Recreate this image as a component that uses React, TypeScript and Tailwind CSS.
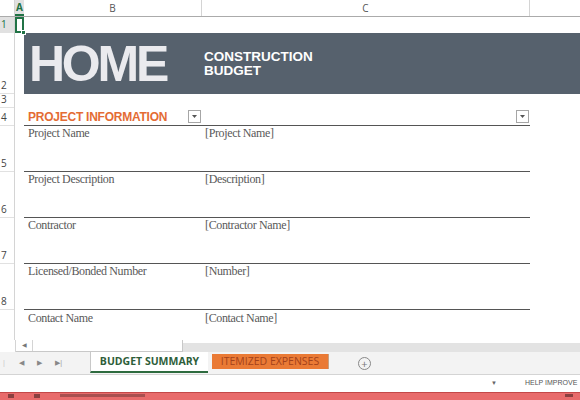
import React from "react";

const rowHeights = [16, 61, 14, 18, 46, 46, 46, 46, 31];

const Dropdown = () => (
  <div className="flex h-[13px] w-[13px] items-center justify-center border border-[#a6a6a6] bg-white">
    <svg width="5" height="3" viewBox="0 0 5 3">
      <path d="M0 0h5L2.5 3z" fill="#555" />
    </svg>
  </div>
);

const fields = [
  ["Project Name", "[Project Name]"],
  ["Project Description", "[Description]"],
  ["Contractor", "[Contractor Name]"],
  ["Licensed/Bonded Number", "[Number]"],
];

export default function App() {
  return (
    <div className="flex h-[400px] w-[580px] flex-col overflow-hidden bg-white font-['Open_Sans',sans-serif]">
      {/* column headers */}
      <div className="flex h-[17px] shrink-0 border-b border-[#ababab] text-[10px] text-[#555]">
        <div className="w-[15px] border-r border-[#d4d4d4]" />
        <div className="flex w-[9px] items-center justify-center border-b-2 border-[#217346] bg-[#e1e1e1] font-bold text-[#217346]">
          A
        </div>
        <div className="flex w-[178px] items-center justify-center border-r border-[#d4d4d4]">B</div>
        <div className="flex w-[328px] items-center justify-center border-r border-[#d4d4d4]">C</div>
        <div className="flex-1" />
      </div>

      {/* sheet body */}
      <div className="flex h-[323px] shrink-0 overflow-hidden">
        <div className="flex w-[15px] shrink-0 flex-col border-r border-[#d4d4d4] text-[10px] leading-none text-[#444]">
          {rowHeights.map((h, i) => (
            <div
              key={i}
              style={{ height: h }}
              className={`flex shrink-0 items-end border-b border-[#e1e1e1] pb-[3px] pl-[1px] ${
                i === 0 ? "bg-[#e1e1e1] text-[#217346]" : ""
              }`}
            >
              {i < 8 ? i + 1 : ""}
            </div>
          ))}
        </div>

        <div className="flex flex-1 flex-col">
          {/* row 1 with selected A1 */}
          <div className="flex h-[16px] shrink-0">
            <div className="relative h-[16px] w-[9px] border-2 border-[#217346]">
              <div className="absolute -bottom-[4px] -right-[4px] h-[5px] w-[5px] border border-white bg-[#217346]" />
            </div>
          </div>

          {/* row 2 banner */}
          <div className="flex h-[61px] shrink-0">
            <div className="w-[9px]" />
            <div className="flex flex-1 items-center bg-[#56616d] font-['Liberation_Sans',sans-serif] font-bold text-[#eaeaee]">
              <div className="w-[178px] pl-[5px] text-[50px] leading-none tracking-[-0.065em]">HOME</div>
              <div className="pl-[2px] pt-[1px] text-[13.5px] leading-[14px] text-white">
                CONSTRUCTION
                <br />
                BUDGET
              </div>
            </div>
          </div>

          {/* row 3 */}
          <div className="h-[14px] shrink-0" />

          {/* row 4 header */}
          <div className="flex h-[18px] shrink-0">
            <div className="w-[9px]" />
            <div className="flex w-[506px] border-b border-[#555]">
              <div className="flex w-[178px] items-center justify-between pl-[4px] pr-[1px]">
                <span className="font-['Liberation_Sans',sans-serif] text-[12px] font-bold tracking-[-0.02em] text-[#e46c34]">
                  PROJECT INFORMATION
                </span>
                <Dropdown />
              </div>
              <div className="flex flex-1 items-center justify-end pr-[1px]">
                <Dropdown />
              </div>
            </div>
          </div>

          {/* field rows */}
          {fields.map(([label, value]) => (
            <div key={label} className="flex h-[46px] shrink-0">
              <div className="w-[9px]" />
              <div className="flex w-[506px] border-b border-[#555] font-['Liberation_Serif',serif] text-[12px] leading-[14px] tracking-[-0.03em] text-[#595959]">
                <div className="w-[178px] pl-[4px]">{label}</div>
                <div className="flex-1 pl-[3px]">{value}</div>
              </div>
            </div>
          ))}

          <div className="flex h-[31px] shrink-0">
            <div className="w-[9px]" />
            <div className="flex w-[506px] pt-[1px] font-['Liberation_Serif',serif] text-[12px] leading-[14px] tracking-[-0.03em] text-[#595959]">
              <div className="w-[178px] pl-[4px]">Contact Name</div>
              <div className="flex-1 pl-[3px]">[Contact Name]</div>
            </div>
          </div>
        </div>
      </div>

      {/* horizontal scrollbar */}
      <div className="flex h-[12px] shrink-0">
        <div className="w-[16px] border-r border-[#d4d4d4]" />
        <div className="flex w-[167px] items-center border-b border-r border-[#c8c8c8]">
          <div className="flex h-full w-[17px] items-center justify-center border-r border-[#d4d4d4] text-[6px] text-[#777]">
            ◀
          </div>
        </div>
        <div className="mt-[3px] flex-1 bg-[#e3e3e3]" />
      </div>

      {/* sheet tabs */}
      <div className="flex h-[23px] shrink-0 items-stretch border-b border-[#d4d4d4] bg-[#f3f3f3] text-[#888]">
        <div className="flex w-[90px] items-center gap-[13px] pl-[2px] text-[7px]">
          <span className="text-[#bbb]">|</span>
          <span>◀</span>
          <span>▶</span>
          <span className="tracking-[-0.1em]">▶|</span>
        </div>
        <div className="flex h-[21px] w-[118px] items-center justify-center border-b-2 border-l border-[#2e6b3f] border-l-[#c8c8c8] bg-white text-[10.5px] font-bold text-[#2e5e3a]">
          BUDGET SUMMARY
        </div>
        <div className="flex w-[4px]" />
        <div className="mt-[2px] flex h-[15px] w-[117px] items-center justify-center border-r border-[#c8a080] bg-[#ea7a35] text-[10.5px] text-[#a3411a]">
          ITEMIZED EXPENSES
        </div>
        <div className="flex flex-1 items-center pl-[29px]">
          <div className="flex h-[13px] w-[13px] items-center justify-center rounded-full border border-[#888] text-[11px] leading-none text-[#777]">
            +
          </div>
        </div>
      </div>

      {/* status bar */}
      <div className="flex h-[17px] shrink-0 items-center bg-white pl-[491px] font-['Liberation_Sans',sans-serif] text-[7px] text-[#555]">
        <span className="text-[6px] text-[#666]">▼</span>
        <span className="ml-[28px] whitespace-nowrap">HELP IMPROVE</span>
      </div>

      {/* taskbar strip */}
      <div className="flex h-[8px] shrink-0 items-start gap-[20px] border-t border-[#c44848] bg-[#e86b6b] pl-[8px] pt-[1px]">
        <div className="h-[4px] w-[6px] bg-[#8a4040]" />
        <div className="h-[4px] w-[6px] bg-[#8a4040]" />
        <div className="h-[3px] w-[85px] bg-[#a85050]" />
        <div className="ml-[400px] h-[3px] w-[8px] bg-[#8a4040]" />
      </div>
    </div>
  );
}
